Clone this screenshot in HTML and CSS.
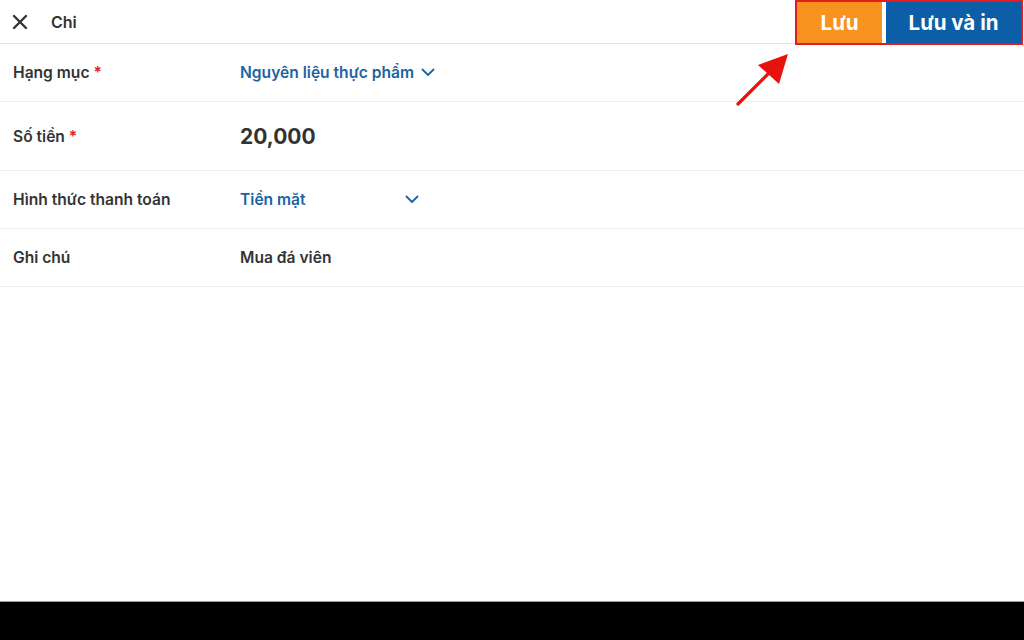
FILE: index.html
```html
<!DOCTYPE html>
<html lang="vi">
<head>
<meta charset="utf-8">
<link rel="stylesheet" href="styles.css">
</head>
<body>
<div class="screen">
  <header class="topbar">
    <div class="title">
      <svg class="close" width="16" height="16" viewBox="0 0 16 16"><path d="M2 2 L14 14 M14 2 L2 14" stroke="#333" stroke-width="2.4" stroke-linecap="round"/></svg>
      <span class="title-text">Chi</span>
    </div>
    <div class="actions">
      <button class="btn btn-save">Lưu</button>
      <button class="btn btn-print">Lưu và in</button>
    </div>
  </header>
  <svg class="arrow" width="60" height="60" viewBox="0 0 60 60"><path d="M5 55 L40 20" stroke="#e8120c" stroke-width="3.2" stroke-linecap="round"/><path d="M55 5 L46 35 L25 16 Z" fill="#e8120c"/></svg>
  <main class="form">
    <div class="row">
      <div class="label">Hạng mục <span class="req">*</span></div>
      <div class="value select">Nguyên liệu thực phẩm <svg class="chev" width="14" height="9" viewBox="0 0 14 9"><path d="M1.5 1.5 L7 7 L12.5 1.5" fill="none" stroke="#1a63a5" stroke-width="1.8" stroke-linecap="round" stroke-linejoin="round"/></svg></div>
    </div>
    <div class="row tall">
      <div class="label">Số tiền <span class="req">*</span></div>
      <div class="value amount">20,000</div>
    </div>
    <div class="row">
      <div class="label">Hình thức thanh toán</div>
      <div class="value select fixed">Tiền mặt <svg class="chev" width="14" height="9" viewBox="0 0 14 9"><path d="M1.5 1.5 L7 7 L12.5 1.5" fill="none" stroke="#1a63a5" stroke-width="1.8" stroke-linecap="round" stroke-linejoin="round"/></svg></div>
    </div>
    <div class="row">
      <div class="label">Ghi chú</div>
      <div class="value note">Mua đá viên</div>
    </div>
  </main>
  <div class="navbar"></div>
</div>
</body>
</html>
```
FILE: styles.css
```css
* { box-sizing: border-box; }
html, body { margin: 0; padding: 0; }
body {
  font-family: "Inter", "Roboto", "Liberation Sans", sans-serif;
  background: #fff;
  color: #333;
}
.screen {
  position: relative;
  width: 1024px;
  height: 640px;
  display: flex;
  flex-direction: column;
}
.topbar {
  height: 44px;
  border-bottom: 1px solid #e6e6e6;
  display: flex;
  justify-content: space-between;
  align-items: flex-start;
}
.title {
  display: flex;
  align-items: center;
  height: 43px;
  padding-left: 12px;
}
.close { display: block; }
.title-text {
  margin-left: 23px;
  font-size: 16px;
  font-weight: 600;
  color: #333;
}
.actions {
  display: flex;
  margin-right: 1px;
  border: 2px solid #e31b23;
  height: 45px;
  background: #fff;
}
.btn {
  border: 0;
  margin: 0;
  font-family: inherit;
  font-size: 20.5px;
  font-weight: 700;
  color: #fff;
  padding: 0;
  height: 41px;
}
.btn-save {
  width: 85px;
  background: #f7931e;
  margin-right: 4px;
}
.btn-print {
  width: 135px;
  background: #0c5ea6;
}
.arrow {
  position: absolute;
  left: 733px;
  top: 49px;
}
.form { flex: 1; }
.row {
  display: flex;
  align-items: center;
  height: 58px;
  border-bottom: 1px solid #ececec;
}
.row.tall { height: 69px; }
.label {
  width: 240px;
  padding-left: 13px;
  font-size: 15.6px;
  font-weight: 600;
  color: #333;
}
.req { color: #e31b23; }
.value {
  font-size: 15.6px;
  font-weight: 600;
}
.select {
  color: #1a63a5;
  display: flex;
  align-items: center;
}
.select .chev { margin-left: 7px; }
.select.fixed { width: 179px; justify-content: space-between; }
.amount {
  font-size: 21px;
  font-weight: 700;
  color: #333;
}
.note { color: #333; }
.navbar {
  height: 39px;
  background: #000;
  border-top: 1px solid #999;
}
```
